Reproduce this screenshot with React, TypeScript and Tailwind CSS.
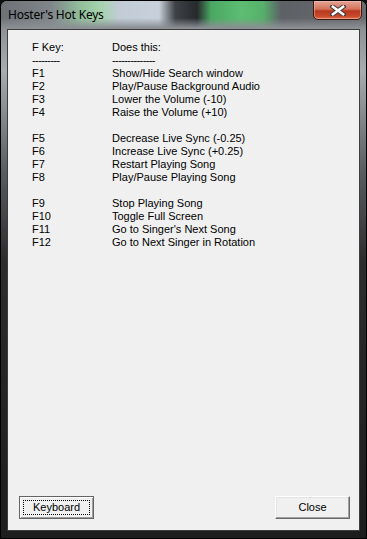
import React from 'react';

const groups: [string, string][][] = [
  [
    ['F1', 'Show/Hide Search window'],
    ['F2', 'Play/Pause Background Audio'],
    ['F3', 'Lower the Volume (-10)'],
    ['F4', 'Raise the Volume (+10)'],
  ],
  [
    ['F5', 'Decrease Live Sync (-0.25)'],
    ['F6', 'Increase Live Sync (+0.25)'],
    ['F7', 'Restart Playing Song'],
    ['F8', 'Play/Pause Playing Song'],
  ],
  [
    ['F9', 'Stop Playing Song'],
    ['F10', 'Toggle Full Screen'],
    ['F11', "Go to Singer's Next Song"],
    ['F12', 'Go to Next Singer in Rotation'],
  ],
];

function CloseGlyph() {
  return (
    <svg width="16" height="11" viewBox="0 0 16 11">
      <path d="M2.5 1.5 L13.5 9.5 M13.5 1.5 L2.5 9.5" stroke="#3a3a3a" strokeWidth="4.4" strokeLinecap="square" />
      <path d="M2.9 1.8 L13.1 9.2 M13.1 1.8 L2.9 9.2" stroke="#ffffff" strokeWidth="2.6" strokeLinecap="square" />
    </svg>
  );
}

export default function App() {
  return (
    <div className="w-[367px] h-[539px] bg-[#101010] font-['Liberation_Sans',Arial,sans-serif]">
      <div className="w-full h-full flex flex-col rounded-t-[7px] border border-black bg-[linear-gradient(to_bottom,#6a6e73_0px,#8f9398_30px,#a8acb1_70px,#5a5d60_170px,#2b2c2e_260px,#1d1d1e_539px)] overflow-hidden">
        {/* title bar */}
        <div className="h-[28px] shrink-0 flex items-start justify-between bg-[image:linear-gradient(to_bottom,transparent_0px,transparent_17px,#8b8f94_27px),linear-gradient(to_right,#6e7277_0px,#80858a_50px,#93c09c_80px,#a5d3ad_100px,#c2ccd6_118px,#c8d1db_158px,#3f4246_174px,#26292c_196px,#4aa762_210px,#5dbd72_240px,#56b06b_262px,#5d6166_280px,#686c71_366px)]">
          <div className="pl-[7px] pt-[7px] text-[12px] leading-[14px] text-black font-['Noto_Sans',sans-serif] tracking-[-0.2px]">
            Hoster's Hot Keys
          </div>
          <div className="mr-[4px] w-[49px] h-[20px] -mt-px flex items-center justify-center rounded-b-[5px] border border-[#3e1a14] shadow-[inset_0_0_0_1px_rgba(255,200,180,0.45)] bg-[linear-gradient(to_bottom,#e3a797_0%,#d4725a_45%,#b8381f_55%,#c9492c_85%,#e07a55_100%)]">
            <CloseGlyph />
          </div>
        </div>

        {/* client */}
        <div className="flex-1 mx-[6px] mb-[7px] flex flex-col border border-[#3d3d3d] bg-[#f0f0f0] text-[11px] leading-[13px] text-black">
          <div className="pt-[11px] pl-[24px] grid grid-cols-[80px_1fr]">
            <div>F Key:</div>
            <div>Does this:</div>
            <div className="tracking-[-0.6px]">---------</div>
            <div className="tracking-[-0.6px]">--------------</div>
            {groups.map((g, gi) => (
              <React.Fragment key={gi}>
                {gi > 0 && <div className="col-span-2 h-[13px]" />}
                {g.map(([k, d]) => (
                  <React.Fragment key={k}>
                    <div>{k}</div>
                    <div>{d}</div>
                  </React.Fragment>
                ))}
              </React.Fragment>
            ))}
          </div>

          <div className="flex-1" />

          <div className="flex justify-between pl-[11px] pr-[9px] pb-[11px]">
            <button className="w-[75px] h-[23px] border border-[#646464] bg-[#f0f0f0] shadow-[inset_1px_1px_0_#ffffff,inset_-1px_-1px_0_#a0a0a0] p-[3px]">
              <div className="w-full h-full flex items-center justify-center outline outline-1 outline-dotted outline-black -outline-offset-1">
                Keyboard
              </div>
            </button>
            <button className="w-[75px] h-[23px] flex items-center justify-center border border-t-[#ffffff] border-l-[#ffffff] border-r-[#696969] border-b-[#696969] bg-[#f0f0f0] shadow-[inset_-1px_-1px_0_#a0a0a0,inset_1px_1px_0_#e3e3e3]">
              Close
            </button>
          </div>
        </div>
      </div>
    </div>
  );
}
